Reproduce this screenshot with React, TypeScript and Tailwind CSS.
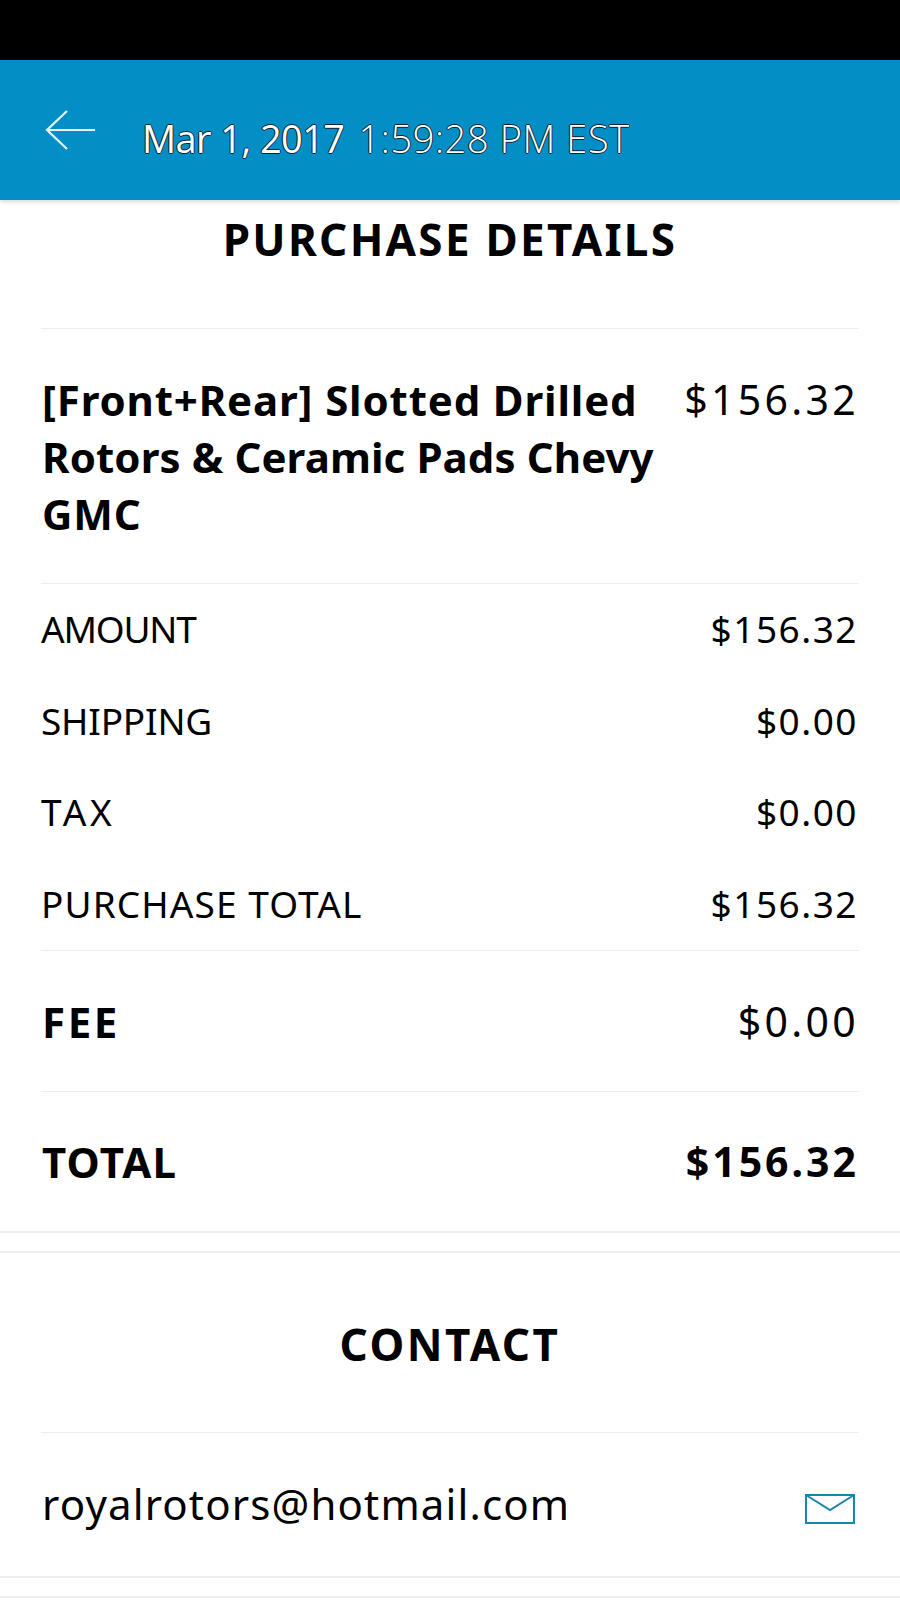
import React from 'react';

const rows = [
  { label: 'AMOUNT', value: '$156.32', track: 'tracking-[-1.2px]' },
  { label: 'SHIPPING', value: '$0.00', track: 'tracking-[-0.2px]' },
  { label: 'TAX', value: '$0.00', track: 'tracking-[3.7px]' },
  { label: 'PURCHASE TOTAL', value: '$156.32', track: 'tracking-[1.1px]' },
];

const App: React.FC = () => {
  return (
    <div className="w-[900px] h-[1600px] overflow-hidden bg-white text-black font-['Noto_Sans',sans-serif]">
      <div className="h-[60px] bg-black" />

      <header className="relative z-10 h-[140px] bg-[#038fc6] shadow-[0_2px_4px_rgba(0,0,0,0.15)] flex items-start">
        <svg className="ml-[44px] mt-[48px] shrink-0" width="52" height="44" viewBox="0 0 52 44" fill="none" stroke="#e6f7fc" strokeWidth="2.2">
          <path d="M51 22H3" />
          <path d="M23 3L3 22l20 19" />
        </svg>
        <div className="ml-[46px] mt-[55px] text-[38px] leading-[46px] text-white whitespace-nowrap [text-shadow:1px_0_0_#0a2230,-1px_0_0_#0a2230,0_1px_0_#0a2230,0_-1px_0_#0a2230] font-['Open_Sans',sans-serif]">
          <span className="tracking-[-0.6px]">Mar 1, 2017</span>
          <span className="ml-[14px] font-light tracking-[0.6px]">1:59:28 PM EST</span>
        </div>
      </header>

      <section className="px-[41px]">
        <h2 className="h-[129px] pt-[11px] text-center text-[44px] leading-[56px] font-bold tracking-[2.3px] border-b border-[#eeeeee]">PURCHASE DETAILS</h2>

        <div className="h-[255px] pt-[42px] flex justify-between border-b border-[#eeeeee]">
          <div className="w-[645px] pl-[1px] text-[42px] leading-[57px] font-bold tracking-[0.85px]">
            [Front+Rear] Slotted Drilled <span className="tracking-[0.1px]">Rotors &amp; Ceramic Pads Chevy</span> GMC
          </div>
          <div className="text-[41px] leading-[57px] tracking-[3.3px]">$156.32</div>
        </div>

        <div className="h-[367px] pt-[22px] border-b border-[#eeeeee]">
          {rows.map((row) => (
            <div key={row.label} className="h-[91.5px] flex justify-between text-[37px] leading-[46px]">
              <span className={row.track}>{row.label}</span>
              <span className="pr-[1px] tracking-[1.5px]">{row.value}</span>
            </div>
          ))}
        </div>

        <div className="h-[141px] pt-[1px] flex items-center justify-between border-b border-[#eeeeee] text-[41px]">
          <span className="pl-[1px] text-[42px] font-bold tracking-[2.6px]">FEE</span>
          <span className="tracking-[3.3px]">$0.00</span>
        </div>

        <div className="h-[139px] flex items-center justify-between text-[41px] font-bold">
          <span className="pl-[1px] text-[42px] tracking-[1.2px]">TOTAL</span>
          <span className="tracking-[3px]">$156.32</span>
        </div>
      </section>

      <div className="h-[22px] border-y-2 border-[#eeeeee]" />

      <section className="px-[41px]">
        <h2 className="h-[180px] pt-[63px] text-center text-[44px] leading-[56px] font-bold tracking-[2.5px] border-b border-[#eeeeee]">CONTACT</h2>
        <div className="h-[143px] flex items-center justify-between text-[42px]">
          <span className="pl-[1px] pb-[2px] tracking-[1.15px]">royalrotors@hotmail.com</span>
          <svg className="mr-[4px] mt-[9px]" width="50" height="30" viewBox="0 0 50 30" fill="none" stroke="#1b84ac" strokeWidth="2">
            <path d="M1 1h48v28H1z" />
            <path d="M1 1l24 15L49 1" />
          </svg>
        </div>
      </section>

      <div className="h-[22px] border-y-2 border-[#eeeeee]" />
    </div>
  );
};

export default App;
